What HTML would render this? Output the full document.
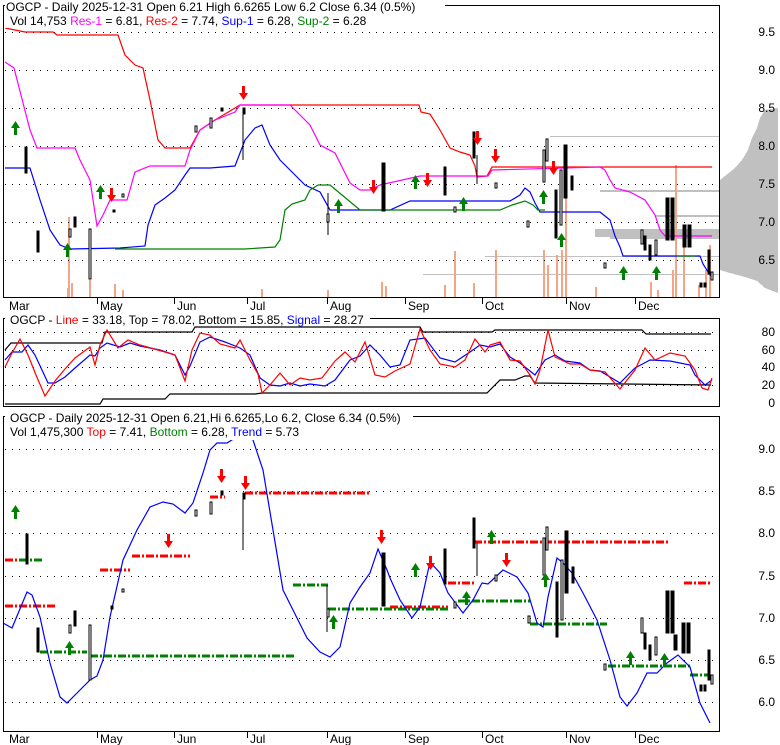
<!DOCTYPE html>
<html><head><meta charset="utf-8"><style>
body{margin:0;background:#fff;}
svg{display:block;font-family:"Liberation Sans",Arial,sans-serif;font-size:12px;}
</style></head><body>
<svg width="780" height="745" viewBox="0 0 780 745" xmlns="http://www.w3.org/2000/svg">
<defs>
<polygon id="up" points="4.5,0 9,7 6,7 6,14 3,14 3,7 0,7" fill="#008000"/>
<polygon id="dn" points="4.5,14 9,7 6,7 6,0 3,0 3,7 0,7" fill="#ff0000"/>
</defs>
<rect width="780" height="745" fill="#fff"/>

<!-- ============ PANEL 1 ============ -->
<g fill="#c0c0c0" shape-rendering="crispEdges">
<polygon points="778,108 765,110 760,118 757,128 752,138 748,150 742,160 735,168 725,176 720,180 720,270 730,273 745,277 757,281 765,288 778,293"/>
<rect x="550" y="136" width="170" height="1"/>
<rect x="600" y="190" width="120" height="2"/>
<rect x="595" y="229" width="125" height="8"/>
<rect x="423" y="274" width="297" height="1"/>
<rect x="485" y="256" width="235" height="1"/>
<rect x="610" y="236" width="110" height="3"/>
<rect x="655" y="215" width="65" height="2"/>
</g>
<g fill="#f4a586" shape-rendering="crispEdges">
<rect x="68" y="217" width="2" height="80"/><rect x="71" y="283" width="2" height="14"/><rect x="67" y="288" width="2" height="9"/>
<rect x="89" y="280" width="2" height="17"/><rect x="114" y="284" width="2" height="13"/><rect x="122" y="290" width="2" height="7"/>
<rect x="261" y="289" width="2" height="8"/><rect x="327" y="290" width="2" height="7"/><rect x="381" y="282" width="2" height="15"/>
<rect x="385" y="286" width="2" height="11"/><rect x="444" y="285" width="2" height="12"/><rect x="454" y="251" width="2" height="46"/>
<rect x="473" y="283" width="2" height="14"/><rect x="495" y="250" width="2" height="47"/><rect x="543" y="250" width="2" height="47"/>
<rect x="547" y="265" width="2" height="32"/><rect x="556" y="255" width="2" height="42"/><rect x="561" y="250" width="2" height="47"/>
<rect x="565" y="150" width="2" height="147"/><rect x="595" y="287" width="2" height="10"/><rect x="650" y="282" width="2" height="15"/>
<rect x="657" y="290" width="2" height="7"/><rect x="672" y="270" width="2" height="27"/><rect x="675" y="165" width="2" height="132"/>
<rect x="683" y="244" width="2" height="53"/><rect x="709" y="245" width="2" height="52"/>
<rect x="705" y="270" width="2" height="27"/><rect x="698" y="285" width="2" height="12"/>
</g>
<g stroke="#000" stroke-dasharray="1,6" stroke-width="1">
<line x1="5" y1="32.5" x2="718" y2="32.5"/><line x1="5" y1="70.5" x2="718" y2="70.5"/><line x1="5" y1="108.5" x2="718" y2="108.5"/>
<line x1="5" y1="146.5" x2="718" y2="146.5"/><line x1="5" y1="184.5" x2="718" y2="184.5"/><line x1="5" y1="222.5" x2="718" y2="222.5"/>
<line x1="5" y1="260.5" x2="718" y2="260.5"/>
</g>
<g fill="none" stroke-width="1.2">
<polyline stroke="#ff0000" points="5,28 25,32 53,32 57,35 118,35 125,55 135,65 143,68 150,100 158,140 165,148 190,148 200,130 215,120 240,105 290,105 419,105 421,112 430,114 440,130 450,148 460,152 470,155 475,166 477,177 487,176 492,167 712,167"/>
<polyline stroke="#ff00ff" points="5,62 14,68 30,130 37,148 75,148 80,160 90,180 97,226 103,215 110,200 127,200 135,172 150,166 185,166 190,150 200,130 215,120 235,112 240,105 290,105 300,115 310,125 320,145 335,153 350,183 360,190 370,190 380,185 420,176 476,176 488,176 492,170 600,167 605,170 610,180 615,188 630,192 645,200 655,215 660,230 665,236 712,236"/>
<polyline stroke="#0000ff" points="5,168 30,168 40,200 50,230 60,245 70,249 120,248 145,246 148,225 155,205 165,198 175,190 185,175 190,168 210,168 235,166 245,140 255,128 262,125 270,145 280,160 290,170 305,185 320,192 330,210 345,210 390,210 410,201 510,201 520,195 525,188 530,192 535,203 540,212 600,212 610,220 615,236 620,247 623,256 700,256 703,264 710,275 712,276"/>
<polyline stroke="#008000" points="115,249 245,249 275,247 280,240 285,210 292,204 305,200 310,190 318,185 330,185 360,210 500,210 512,205 525,201 533,205 538,210 545,210"/>
<polyline stroke="#008000" points="677,256 695,256"/>
</g>
<g stroke="#000" stroke-width="1" shape-rendering="crispEdges">
<rect x="25" y="147" width="2" height="26" fill="#000"/>
<rect x="37" y="231" width="2" height="21" fill="#000"/>
<rect x="69" y="229" width="2" height="8" fill="#fff"/>
<rect x="74" y="217" width="2" height="10" fill="#000"/>
<rect x="89" y="229" width="2" height="50" fill="#fff"/>
<rect x="113" y="210" width="2" height="2" fill="#000"/>
<rect x="122" y="194" width="2" height="3" fill="#fff"/>
<rect x="195" y="126" width="2" height="6" fill="#fff"/>
<rect x="210" y="118" width="2" height="10" fill="#fff"/>
<rect x="221" y="108" width="2" height="3" fill="#000"/>
<line x1="243" y1="108" x2="243" y2="160"/><rect x="243" y="108" width="2" height="6" fill="#000"/>
<line x1="328" y1="193" x2="328" y2="235"/><rect x="327" y="214" width="2" height="8" fill="#fff"/>
<rect x="382" y="163" width="3" height="48" fill="#000"/>
<rect x="444" y="167" width="2" height="28" fill="#000"/>
<rect x="454" y="207" width="2" height="5" fill="#fff"/>
<rect x="473" y="132" width="2" height="26" fill="#000"/>
<line x1="477" y1="155" x2="477" y2="184"/>
<rect x="495" y="183" width="2" height="5" fill="#fff"/>
<rect x="527" y="221" width="2" height="6" fill="#fff"/>
<rect x="543" y="150" width="2" height="32" fill="#fff"/><rect x="546" y="139" width="2" height="22" fill="#fff"/>
<rect x="555" y="190" width="2" height="48" fill="#000"/><rect x="560" y="170" width="2" height="55" fill="#fff"/>
<rect x="564" y="145" width="3" height="53" fill="#000"/><rect x="571" y="176" width="2" height="14" fill="#000"/>
<rect x="604" y="263" width="2" height="5" fill="#fff"/>
<rect x="641" y="230" width="2" height="14" fill="#fff"/><rect x="644" y="236" width="2" height="14" fill="#000"/>
<rect x="649" y="245" width="2" height="15" fill="#000"/><rect x="655" y="240" width="2" height="15" fill="#fff"/>
<rect x="666" y="198" width="3" height="42" fill="#000"/><rect x="671" y="198" width="3" height="42" fill="#000"/>
<rect x="683" y="225" width="3" height="22" fill="#000"/><rect x="688" y="225" width="3" height="22" fill="#000"/>
<rect x="700" y="283" width="2" height="4" fill="#000"/><rect x="704" y="283" width="2" height="4" fill="#000"/>
<rect x="708" y="250" width="2" height="24" fill="#000"/><rect x="711" y="272" width="2" height="8" fill="#fff"/>
</g>
<g>
<use href="#up" x="11" y="121"/><use href="#up" x="63" y="243"/>
<use href="#up" x="96" y="185"/><use href="#up" x="334" y="199"/>
<use href="#up" x="411" y="175"/><use href="#up" x="459" y="197"/>
<use href="#up" x="539" y="190"/><use href="#up" x="557" y="233"/>
<use href="#up" x="619" y="266"/><use href="#up" x="652" y="266"/>
<use href="#dn" x="107" y="188"/><use href="#dn" x="239" y="86"/>
<use href="#dn" x="369" y="180"/><use href="#dn" x="423" y="173"/>
<use href="#dn" x="473" y="131"/><use href="#dn" x="491" y="149"/>
<use href="#dn" x="549" y="161"/>
</g>
<rect x="3.5" y="5.5" width="716" height="292" fill="none" stroke="#000"/>
<rect x="5" y="0" width="440" height="28" fill="#fff"/>
<text x="6" y="11" fill="#000">OGCP - Daily 2025-12-31 Open 6.21  High 6.6265  Low 6.2  Close 6.34 (0.5%)</text>
<text x="10" y="25"><tspan fill="#000">Vol 14,753 </tspan><tspan fill="#ff00ff">Res-1</tspan><tspan fill="#000"> = 6.81, </tspan><tspan fill="#ff0000">Res-2</tspan><tspan fill="#000"> = 7.74, </tspan><tspan fill="#0000ff">Sup-1</tspan><tspan fill="#000"> = 6.28, </tspan><tspan fill="#008000">Sup-2</tspan><tspan fill="#000"> = 6.28</tspan></text>
<g fill="#000" text-anchor="end">
<text x="775" y="36">9.5</text><text x="775" y="74">9.0</text><text x="775" y="112">8.5</text><text x="775" y="150">8.0</text>
<text x="775" y="188">7.5</text><text x="775" y="226">7.0</text><text x="775" y="264">6.5</text>
</g>
<g stroke="#000"><line x1="97.5" y1="298" x2="97.5" y2="304"/><line x1="174.5" y1="298" x2="174.5" y2="304"/><line x1="247.5" y1="298" x2="247.5" y2="304"/><line x1="327.5" y1="298" x2="327.5" y2="304"/><line x1="405.5" y1="298" x2="405.5" y2="304"/><line x1="482.5" y1="298" x2="482.5" y2="304"/><line x1="566.5" y1="298" x2="566.5" y2="304"/><line x1="635.5" y1="298" x2="635.5" y2="304"/></g>
<g fill="#000"><text x="9" y="310">Mar</text><text x="100" y="310">May</text><text x="177" y="310">Jun</text><text x="250" y="310">Jul</text><text x="330" y="310">Aug</text><text x="408" y="310">Sep</text><text x="485" y="310">Oct</text><text x="569" y="310">Nov</text><text x="638" y="310">Dec</text></g>

<!-- ============ PANEL 2 ============ -->
<g stroke="#000" stroke-dasharray="1,6"><line x1="5" y1="332.5" x2="718" y2="332.5"/><line x1="5" y1="350.5" x2="718" y2="350.5"/><line x1="5" y1="367.5" x2="718" y2="367.5"/><line x1="5" y1="385.5" x2="718" y2="385.5"/></g>
<g fill="none" stroke-width="1.2">
<polyline stroke="#000" points="5,350 11,343 102,343 105,332 192,332 195,327 420,327 423,332 492,332 495,330 642,330 646,334 711,334"/>
<polyline stroke="#000" points="5,404 100,404 103,399 165,399 170,394 255,394 262,393 487,393 495,385 500,380 515,380 525,376 530,376 535,383 711,385"/>
<polyline stroke="#0000ff" points="5,360 12,352 22,352 28,345 35,355 42,370 48,383 55,383 65,377 75,368 90,355 95,356 100,348 107,343 120,347 130,343 140,346 160,350 175,355 185,375 190,366 200,342 210,337 225,342 240,348 250,355 260,378 270,385 280,386 290,383 300,386 310,384 325,386 335,380 350,360 360,356 370,345 380,355 390,367 400,365 410,340 425,338 440,358 455,362 470,352 480,345 490,347 500,344 510,357 520,363 535,375 545,360 555,355 565,361 580,363 590,370 600,371 620,383 635,368 650,360 670,361 690,365 695,375 705,385 712,380"/>
<polyline stroke="#ff0000" points="5,367 12,353 20,339 28,355 36,375 45,396 55,381 65,369 75,358 90,347 95,365 100,345 107,330 118,348 128,340 140,345 165,352 175,355 185,381 192,350 200,333 210,335 220,344 235,348 240,340 250,360 258,374 262,393 270,385 280,373 290,385 300,378 310,380 322,378 335,361 345,352 355,362 365,342 375,375 385,377 395,371 410,364 420,329 430,350 440,364 455,367 465,360 475,339 485,352 490,345 500,342 510,360 520,361 530,375 535,384 540,370 548,330 555,357 570,364 580,364 590,370 605,372 620,389 635,370 645,348 655,360 670,353 685,356 695,370 702,388 708,390 712,378"/>
</g>
<rect x="3.5" y="318.5" width="716" height="88" fill="none" stroke="#000"/>
<rect x="5" y="312" width="365" height="14" fill="#fff"/>
<text x="10" y="324"><tspan fill="#000">OGCP - </tspan><tspan fill="#ff0000">Line</tspan><tspan fill="#000"> = 33.18, Top = 78.02, Bottom = 15.85, </tspan><tspan fill="#0000ff">Signal</tspan><tspan fill="#000"> = 28.27</tspan></text>
<g fill="#000" text-anchor="end"><text x="775" y="336">80</text><text x="775" y="354">60</text><text x="775" y="371">40</text><text x="775" y="389">20</text><text x="775" y="407">0</text></g>

<!-- ============ PANEL 3 ============ -->
<g stroke="#000" stroke-dasharray="1,6">
<line x1="5" y1="449.5" x2="718" y2="449.5"/><line x1="5" y1="491.5" x2="718" y2="491.5"/><line x1="5" y1="533.5" x2="718" y2="533.5"/>
<line x1="5" y1="576.5" x2="718" y2="576.5"/><line x1="5" y1="618.5" x2="718" y2="618.5"/><line x1="5" y1="660.5" x2="718" y2="660.5"/><line x1="5" y1="702.5" x2="718" y2="702.5"/>
</g>
<g stroke-width="3" stroke-dasharray="8,2,2,2" fill="none">
<line stroke="#ff0000" x1="245" y1="493" x2="369" y2="493"/>
<line stroke="#ff0000" x1="132" y1="556" x2="190" y2="556"/>
<line stroke="#ff0000" x1="100" y1="570" x2="130" y2="570"/>
<line stroke="#ff0000" x1="474" y1="542" x2="668" y2="542"/>
<line stroke="#ff0000" x1="448" y1="583" x2="475" y2="583"/>
<line stroke="#ff0000" x1="684" y1="583" x2="712" y2="583"/>
<line stroke="#ff0000" x1="5" y1="606" x2="55" y2="606"/>
<line stroke="#ff0000" x1="390" y1="607" x2="448" y2="607"/>
<line stroke="#ff0000" x1="5" y1="560" x2="20" y2="560"/>
<line stroke="#ff0000" x1="210" y1="497" x2="225" y2="497"/>
<line stroke="#008000" x1="90" y1="656" x2="295" y2="656"/>
<line stroke="#008000" x1="40" y1="652" x2="87" y2="652"/>
<line stroke="#008000" x1="20" y1="560" x2="43" y2="560"/>
<line stroke="#008000" x1="293" y1="585" x2="328" y2="585"/>
<line stroke="#008000" x1="328" y1="609" x2="450" y2="609"/>
<line stroke="#008000" x1="458" y1="601" x2="530" y2="601"/>
<line stroke="#008000" x1="530" y1="624" x2="607" y2="624"/>
<line stroke="#008000" x1="608" y1="666" x2="690" y2="666"/>
<line stroke="#008000" x1="690" y1="675" x2="710" y2="675"/>
</g>
<polyline fill="none" stroke="#0000ff" stroke-width="1.2" points="3,623 12,628 27,592 32,595 40,617 50,663 60,697 67,703 80,690 90,680 97,676 103,660 110,617 123,560 137,530 150,507 163,502 173,504 185,513 193,503 203,473 210,450 217,443 227,443 235,438 240,425 248,425 253,440 263,470 273,530 283,590 293,610 307,638 320,652 330,657 340,647 350,603 360,587 370,573 378,549 387,570 390,578 400,600 412,618 420,607 430,562 440,573 448,593 463,613 473,600 482,583 488,584 503,570 517,577 528,593 537,623 543,627 548,597 557,558 563,563 572,573 583,593 597,620 610,660 620,697 627,706 637,693 647,673 657,673 667,663 678,655 690,667 700,703 710,723"/>
<g stroke="#000" stroke-width="1" shape-rendering="crispEdges">
<rect x="26" y="534" width="2" height="30" fill="#000"/>
<rect x="37" y="628" width="2" height="24" fill="#000"/>
<rect x="69" y="625" width="2" height="8" fill="#fff"/><rect x="74" y="611" width="2" height="15" fill="#000"/>
<rect x="89" y="625" width="2" height="55" fill="#fff"/>
<rect x="111" y="606" width="2" height="3" fill="#000"/><rect x="122" y="589" width="2" height="3" fill="#fff"/>
<rect x="195" y="510" width="2" height="6" fill="#fff"/><rect x="210" y="502" width="2" height="12" fill="#fff"/>
<rect x="221" y="491" width="2" height="4" fill="#000"/>
<line x1="243" y1="493" x2="243" y2="550"/><rect x="243" y="493" width="2" height="6" fill="#000"/>
<line x1="327" y1="585" x2="327" y2="632"/><rect x="327" y="609" width="2" height="8" fill="#fff"/>
<rect x="382" y="553" width="3" height="53" fill="#000"/>
<rect x="444" y="549" width="2" height="35" fill="#000"/>
<rect x="454" y="602" width="2" height="6" fill="#fff"/>
<rect x="473" y="518" width="2" height="30" fill="#000"/><line x1="477" y1="543" x2="477" y2="576"/>
<rect x="495" y="575" width="2" height="6" fill="#fff"/>
<rect x="528" y="616" width="2" height="7" fill="#fff"/>
<rect x="543" y="538" width="2" height="37" fill="#fff"/><rect x="546" y="527" width="2" height="23" fill="#fff"/>
<rect x="556" y="582" width="2" height="55" fill="#000"/><rect x="561" y="560" width="2" height="60" fill="#fff"/>
<rect x="565" y="531" width="3" height="62" fill="#000"/><rect x="572" y="567" width="2" height="16" fill="#000"/>
<rect x="604" y="664" width="2" height="6" fill="#fff"/>
<rect x="641" y="618" width="2" height="15" fill="#fff"/><rect x="644" y="633" width="2" height="16" fill="#000"/>
<rect x="649" y="645" width="2" height="15" fill="#000"/><rect x="655" y="637" width="2" height="18" fill="#fff"/>
<rect x="666" y="591" width="3" height="42" fill="#000"/><rect x="671" y="591" width="3" height="42" fill="#000"/>
<rect x="674" y="635" width="3" height="15" fill="#000"/><rect x="682" y="623" width="3" height="30" fill="#000"/><rect x="687" y="623" width="3" height="30" fill="#000"/>
<rect x="700" y="685" width="2" height="6" fill="#000"/><rect x="704" y="685" width="2" height="6" fill="#000"/>
<rect x="708" y="650" width="2" height="30" fill="#000"/><rect x="711" y="675" width="2" height="9" fill="#fff"/>
</g>
<g>
<use href="#up" x="11" y="505"/><use href="#up" x="65" y="641"/>
<use href="#up" x="329" y="615"/><use href="#up" x="411" y="563"/>
<use href="#up" x="462" y="591"/><use href="#up" x="487" y="530"/>
<use href="#up" x="541" y="573"/><use href="#up" x="626" y="651"/>
<use href="#up" x="660" y="653"/>
<use href="#dn" x="164" y="534"/><use href="#dn" x="217" y="469"/>
<use href="#dn" x="241" y="476"/><use href="#dn" x="377" y="530"/>
<use href="#dn" x="426" y="556"/><use href="#dn" x="502" y="553"/>
</g>
<rect x="3.5" y="416.5" width="716" height="315" fill="none" stroke="#000"/>
<rect x="5" y="410" width="408" height="30" fill="#fff"/>
<text x="10" y="422" fill="#000">OGCP - Daily 2025-12-31 Open 6.21,Hi 6.6265,Lo 6.2, Close 6.34 (0.5%)</text>
<text x="10" y="436"><tspan fill="#000">Vol 1,475,300 </tspan><tspan fill="#ff0000">Top</tspan><tspan fill="#000"> = 7.41, </tspan><tspan fill="#008000">Bottom</tspan><tspan fill="#000"> = 6.28, </tspan><tspan fill="#0000ff">Trend</tspan><tspan fill="#000"> = 5.73</tspan></text>
<g fill="#000" text-anchor="end">
<text x="775" y="453">9.0</text><text x="775" y="495">8.5</text><text x="775" y="537">8.0</text><text x="775" y="580">7.5</text>
<text x="775" y="622">7.0</text><text x="775" y="664">6.5</text><text x="775" y="706">6.0</text>
</g>
<g stroke="#000"><line x1="97.5" y1="732" x2="97.5" y2="738"/><line x1="174.5" y1="732" x2="174.5" y2="738"/><line x1="247.5" y1="732" x2="247.5" y2="738"/><line x1="327.5" y1="732" x2="327.5" y2="738"/><line x1="405.5" y1="732" x2="405.5" y2="738"/><line x1="482.5" y1="732" x2="482.5" y2="738"/><line x1="566.5" y1="732" x2="566.5" y2="738"/><line x1="635.5" y1="732" x2="635.5" y2="738"/></g>
<g fill="#000"><text x="9" y="743">Mar</text><text x="100" y="743">May</text><text x="177" y="743">Jun</text><text x="250" y="743">Jul</text><text x="330" y="743">Aug</text><text x="408" y="743">Sep</text><text x="485" y="743">Oct</text><text x="569" y="743">Nov</text><text x="638" y="743">Dec</text></g>
</svg>
</body></html>
